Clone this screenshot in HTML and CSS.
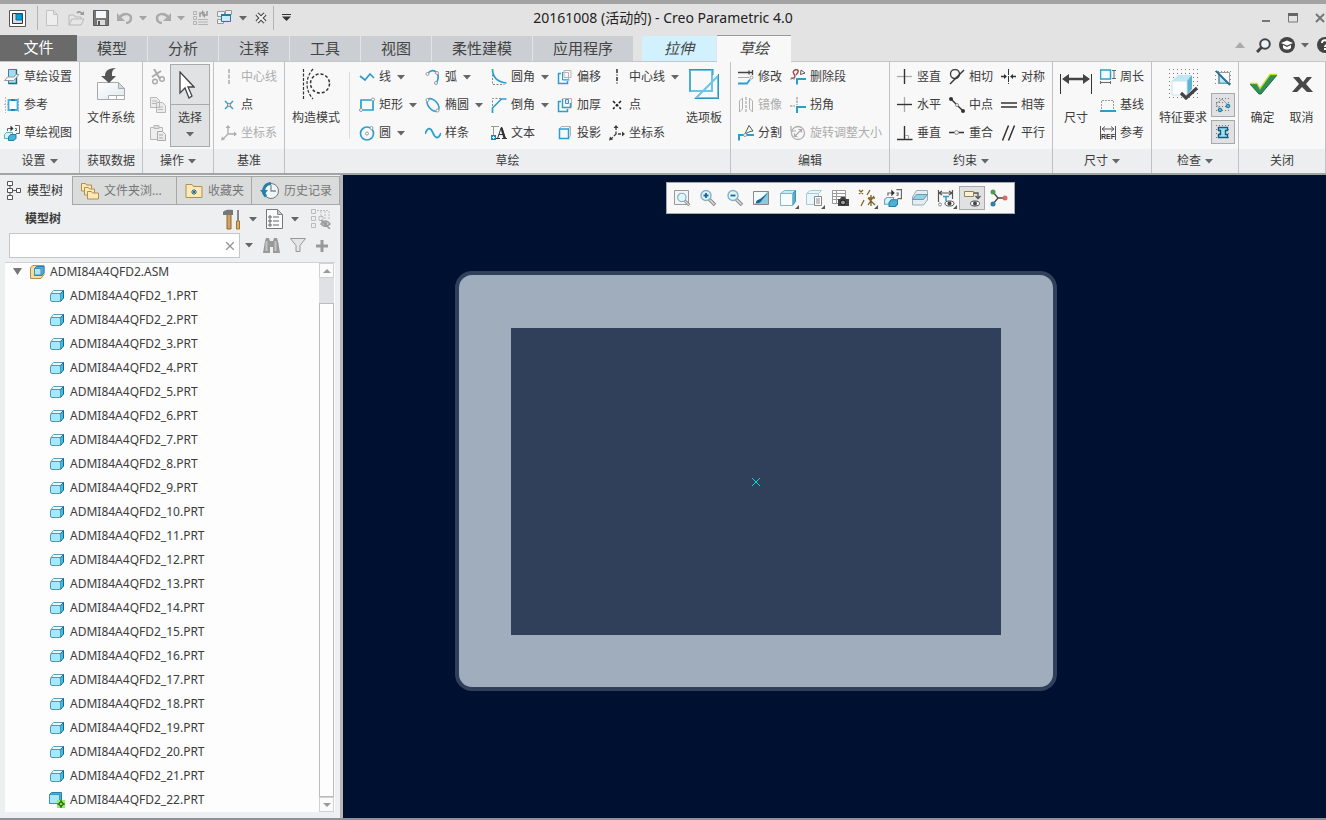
FILE: index.html
```html
<!DOCTYPE html>
<html lang="zh-CN">
<head>
<meta charset="utf-8">
<title>20161008 (活动的) - Creo Parametric 4.0</title>
<link rel="stylesheet" href="styles.css">
</head>
<body>
<svg class="sprite" aria-hidden="true">
  <symbol id="down" viewBox="0 0 8 5"><path d="M0 0h8L4 4.500z" fill="#666"/></symbol>
  <symbol id="part" viewBox="0 0 14 12"><path d="M1 3.500 3.500.5h10L11 3.500z" fill="#e4f9ff" stroke="#5a9dba"/><path d="M10.500 3.500l3-3v7.500l-3 3.500z" fill="#45b8ea" stroke="#1b6688"/><rect x=".5" y="3.500" width="10" height="8" rx="1.500" fill="#a9e8fb" stroke="#4a9cbd"/></symbol>
  <symbol id="views" viewBox="0 0 16 16"><path d="M3.500 6V3.500h4M11 .5h4.500v8H12M11 3.500h1.500v2H11" fill="none" stroke="#666"/><path d="M6.500.5l3 3-3 3z" fill="#333"/><path d="M.5 9.500l2-2h6v4l-2 2h-6z" fill="#d9f1f9" stroke="#5fa9c5"/><path d="M4.500 12l2-2.500h5.500v4l-2 2H4.500z" fill="#4fb0d6" stroke="#2481a8"/></symbol>
  <symbol id="csys" viewBox="0 0 16 16"><path d="M7 2v7h7M7 9l-5 5" fill="none" stroke="currentColor" stroke-width="1.300" stroke-dasharray="var(--dash)"/><path d="M7 0l2.500 3h-5zM16 9l-3-2.500v5zM0 15.500l1-4 3 3z" fill="currentColor"/></symbol>
  <symbol id="lens" viewBox="0 0 18 18"><path d="M10 10l6 6" stroke="#888" stroke-width="3.500"/><path d="M10 10l5.500 5.500" stroke="#ddd" stroke-width="1.500"/><circle cx="7" cy="6.500" r="5" fill="#e2f5fb" stroke="#7fb3c8" stroke-width="1.400"/></symbol>
</svg>

<header class="titlebar">
  <div class="quick">
    <svg class="logo" width="17" height="17" viewBox="0 0 17 17"><path d="M.5.5h16v16H.5z" fill="#fff" stroke="#555"/><path d="M3.500 3.500h10v10h-10z" fill="#ddd" stroke="#333"/><path d="M7 4h6v6H7z" fill="#00a0e0" stroke="#0870a8"/></svg>
    <span class="bar"></span>
    <button class="ic" aria-label="新建"><svg width="16" height="16" viewBox="0 0 16 16"><path d="M2.500.5h7l4 4v11h-11zM9.500.5v4h4" fill="#eee" stroke="#c3c3c3"/></svg></button>
    <button class="ic" aria-label="打开"><svg width="17" height="16" viewBox="0 0 17 16"><path d="M1 15V5h5l1 2h6v2M1 15l3-6h12l-3 6z" fill="#e6e6e6" stroke="#b8b8b8"/><path d="M9 3c2-2 4-1 5 1" fill="none" stroke="#999" stroke-width="1.800"/><path d="M12 5h4V1z" fill="#999"/></svg></button>
    <button class="ic" aria-label="保存"><svg width="16" height="16" viewBox="0 0 16 16"><path d="M.5.5h15v15H.5z" fill="#777" stroke="#5a5a5a"/><path d="M3 1h10v7H3z" fill="#f4f8fa"/><path d="M4 10h8v5H4z" fill="#ddd"/><path d="M5 11h2v4H5z" fill="#555"/></svg></button>
    <button class="ic undo" aria-label="撤消"><svg width="16" height="14" viewBox="0 0 16 14"><path d="M3 6c4-5 11-3 11 1 0 3-2 5-5 5" fill="none" stroke="#aaa" stroke-width="2.500"/><path d="M0 2v8h8z" fill="#aaa"/></svg><svg class="dim" width="8" height="5"><use href="#down"/></svg></button>
    <button class="ic undo" aria-label="重做"><svg width="16" height="14" viewBox="0 0 16 14"><path d="M13 6C9 1 2 3 2 7c0 3 2 5 5 5" fill="none" stroke="#aaa" stroke-width="2.500"/><path d="M16 2v8H8z" fill="#aaa"/></svg><svg class="dim" width="8" height="5"><use href="#down"/></svg></button>
    <button class="ic" aria-label="重新生成"><svg width="16" height="16" viewBox="0 0 16 16"><path d="M.5 1.500h3v3h-3zM.5 6.500h3v3h-3zM.5 11.500h3v3h-3zM5 9.500h10M5 12h10M5 14.500h10" fill="none" stroke="#b3b3b3"/><path d="M7 7V3h3M14 1v4h-3" fill="none" stroke="#999" stroke-width="1.500"/><path d="M9 0v5l3-2zM12 2v6L9 5z" fill="#999"/></svg></button>
    <button class="ic undo" aria-label="窗口"><svg width="16" height="16" viewBox="0 0 16 16"><path d="M.5 1.500h7v5h-7zM8.500.5h6v4h-6zM.5 9.500h6v4h-6z" fill="#eee" stroke="#999"/><path d="M4.500 4.500h9v7h-9z" fill="#c9edf8" stroke="#1c7fa8"/><path d="M4 5h10" stroke="#1c7fa8" stroke-width="2"/></svg><svg width="8" height="5"><use href="#down"/></svg></button>
    <button class="ic" aria-label="关闭窗口"><svg width="12" height="12" viewBox="0 0 12 12"><path d="M2 2l8 8M10 2l-8 8" stroke="#444" stroke-width="4.200"/><path d="M2 2l8 8M10 2l-8 8" stroke="#f4f4f4" stroke-width="2"/></svg></button>
    <span class="bar end"></span>
    <button class="ic" aria-label="自定义快速访问工具栏"><svg width="10" height="8" viewBox="0 0 10 8"><path d="M0 .5h9" stroke="#333"/><path d="M0 2.500h9L4.500 7z" fill="#333"/></svg></button>
  </div>
  <h1>20161008 (活动的) - Creo Parametric 4.0</h1>
  <div class="window">
    <button class="ic" aria-label="最小化"><svg width="10" height="10" viewBox="0 0 10 10"><path d="M1 8h8" stroke="#777" stroke-width="2"/></svg></button>
    <button class="ic" aria-label="最大化"><svg width="10" height="10" viewBox="0 0 10 10"><path d="M.5 1v8h9V1z" fill="none" stroke="#777"/><path d="M0 1.500h10" stroke="#666" stroke-width="3"/></svg></button>
    <button class="ic" aria-label="关闭"><svg width="10" height="10" viewBox="0 0 10 10"><path d="M1 1l8 8M9 1L1 9" stroke="#777" stroke-width="2"/></svg></button>
  </div>
</header>

<nav class="tabs">
  <button class="tab file">文件</button>
  <button class="tab">模型</button>
  <button class="tab">分析</button>
  <button class="tab">注释</button>
  <button class="tab">工具</button>
  <button class="tab">视图</button>
  <button class="tab wide">柔性建模</button>
  <button class="tab wide">应用程序</button>
  <button class="tab context">拉伸</button>
  <button class="tab current">草绘</button>
  <div class="help">
    <button class="ic" aria-label="最小化功能区"><svg width="10" height="6" viewBox="0 0 10 6"><path d="M0 6h10L5 0z" fill="#aaa"/></svg></button>
    <button class="ic search" aria-label="搜索"><svg width="15" height="15" viewBox="0 0 15 15"><circle cx="9" cy="6" r="4.800" fill="#e8f4f8" stroke="#444" stroke-width="2"/><path d="M5.500 9.500l-4.500 4.500" stroke="#444" stroke-width="3"/></svg></button>
    <button class="ic" aria-label="学习"><svg width="16" height="16" viewBox="0 0 16 16"><circle cx="8" cy="8" r="8" fill="#444"/><path d="M2 6l6-2.500L14 6 8 8.500z" fill="#fff"/><path d="M4 8v3c2 2 6 2 8 0V8L8 10z" fill="#fff"/></svg></button>
    <svg class="menu" width="8" height="5"><use href="#down"/></svg>
    <button class="ic" aria-label="帮助"><svg width="16" height="16" viewBox="0 0 16 16"><circle cx="8" cy="8" r="8" fill="#444"/><path d="M5 6c0-4 6-3.500 6 0 0 2-3 2-3 4M8 11v2" fill="none" stroke="#fff" stroke-width="2"/></svg></button>
  </div>
</nav>

<section class="ribbon">
  <div class="group g-set">
    <div class="tools">
      <div class="cols">
        <button class="tool"><svg viewBox="0 0 16 16"><path d="M4.500.5h8v14H4.500z" fill="#a3dcee" stroke="#2a86aa"/><path d="M12.500.5v14h-8" fill="none" stroke="#1c6a8a" stroke-width="1.400"/><path d="M.5 11.500h9l5.500-6h-3l-2 2.500H3.500z" fill="#f5fafc" stroke="#999"/></svg>草绘设置</button>
        <button class="tool"><svg viewBox="0 0 16 16"><path d="M1.500 0v16M14.500 1v14M0 7.500h5" stroke="#bbb" stroke-dasharray="2 1"/><path d="M4.500 3h9v10h-9z" fill="#fff" stroke="#43aedb" stroke-width="1.800"/><path d="M7 3h4M7 13h4" stroke="#2683ab" stroke-width="1.800"/></svg>参考</button>
        <button class="tool"><svg viewBox="0 0 16 16"><use href="#views"/></svg>草绘视图</button>
      </div>
    </div>
    <button class="caption">设置<svg width="8" height="5"><use href="#down"/></svg></button>
  </div>

  <div class="group g-get">
    <div class="tools">
      <button class="big"><svg viewBox="0 0 32 32"><defs><linearGradient id="page" x1="0" y1="0" x2="1" y2="1"><stop offset="0" stop-color="#fff"/><stop offset="1" stop-color="#dfe8ec"/></linearGradient></defs><path d="M2.500 14.500h21l6 6v11h-27z" fill="url(#page)" stroke="#a8a8a8"/><path d="M23.500 14.500v6h6z" fill="#c3dfea" stroke="#a8a8a8"/><path d="M13.500 27.500h16v4h-16zM21.500 28v3" fill="#fff" stroke="#aaa"/><path d="M21 0C12 0 10 4 10 8H6l8 7 7-7h-4c0-4 0-6 4-8z" fill="#555"/></svg>文件系统</button>
    </div>
    <div class="caption">获取数据</div>
  </div>

  <div class="group g-op">
    <div class="tools">
      <div class="cols">
        <button class="tool" disabled aria-label="剪切"><svg viewBox="0 0 16 16"><path d="M4 0l6 10M11 2l-9 6" stroke="#aaa" stroke-width="2"/><circle cx="5" cy="12.500" r="2.300" fill="none" stroke="#aaa" stroke-width="1.500"/><circle cx="12" cy="10" r="2.300" fill="none" stroke="#aaa" stroke-width="1.500"/></svg></button>
        <button class="tool" disabled aria-label="复制"><svg viewBox="0 0 16 16"><path d="M.5.5h6l3 3v7h-9zM2 4h5M2 6.500h5M6.500 5.500h6l3 3v7h-9z" fill="#ececec" stroke="#b8b8b8"/><path d="M8 10h5M8 12.500h5" stroke="#b8b8b8"/></svg></button>
        <button class="tool" disabled aria-label="粘贴"><svg viewBox="0 0 16 16"><path d="M.5 2.500h12v12H.5z" fill="#eee" stroke="#b8b8b8"/><path d="M4 .5h5v3H4z" fill="#ddd" stroke="#b8b8b8"/><path d="M7.500 6.500h5l3 3v6h-8zM9 10h4M9 13h4" fill="#ececec" stroke="#aaa"/></svg></button>
      </div>
      <button class="select"><span class="arrow"><svg width="16" height="28" viewBox="0 0 16 28"><path d="M1 1v21l5-5 4 10 3-2-4-9h6z" fill="#fff" stroke="#444" stroke-width="1.300"/></svg></span><span class="pick">选择<svg width="8" height="5"><use href="#down"/></svg></span></button>
    </div>
    <button class="caption">操作<svg width="8" height="5"><use href="#down"/></svg></button>
  </div>

  <div class="group g-datum">
    <div class="tools">
      <div class="cols">
        <button class="tool" disabled><svg viewBox="0 0 16 16"><path d="M8 0v16" stroke="#aaa" stroke-width="1.500" stroke-dasharray="4 1.500"/></svg>中心线</button>
        <button class="tool"><svg viewBox="0 0 16 16"><path d="M4 4l8 8M12 4l-8 8" stroke="#289fcc" stroke-width="1.400"/><circle cx="8" cy="8" r="1.500" fill="#fff" stroke="#888"/></svg>点</button>
        <button class="tool" disabled><svg viewBox="0 0 16 16"><use href="#csys"/></svg>坐标系</button>
      </div>
    </div>
    <div class="caption">基准</div>
  </div>

  <div class="group g-sketch">
    <div class="tools">
      <button class="big"><svg viewBox="0 0 32 32"><path d="M3.500 1v30M13 1C5 10 5 22 13 31" fill="none" stroke="#333" stroke-width="1.200" stroke-dasharray="3 1.500"/><circle cx="20" cy="15.500" r="9.500" fill="none" stroke="#333" stroke-width="1.500" stroke-dasharray="3 2"/></svg>构造模式</button>
      <div class="cols sketch">
        <button class="tool"><svg viewBox="0 0 16 16"><path d="M1 7l5 4 5-6 4 4" fill="none" stroke="#2a9fce" stroke-width="1.700"/></svg>线<svg class="dd" viewBox="0 0 8 5"><use href="#down"/></svg></button>
        <button class="tool"><svg viewBox="0 0 16 16"><path d="M3 4c5-5 13-1 9 9" fill="none" stroke="#2a9fce" stroke-width="1.700"/><g fill="#fff" stroke="#999"><circle cx="2.500" cy="5" r="1.500"/><circle cx="12" cy="4" r="1.500"/><circle cx="11" cy="14" r="1.500"/></g></svg>弧<svg class="dd" viewBox="0 0 8 5"><use href="#down"/></svg></button>
        <button class="tool"><svg viewBox="0 0 16 16"><path d="M1.500 2v13.500h12" fill="none" stroke="#888" stroke-dasharray="2 1.500"/><path d="M1.500 0c0 8 5 13 14 14" fill="none" stroke="#2a9fce" stroke-width="1.700"/></svg>圆角<svg class="dd" viewBox="0 0 8 5"><use href="#down"/></svg></button>
        <button class="tool"><svg viewBox="0 0 16 16"><path d="M7 1.500h7v7H7zM5.500 3.500h6v7h-6z" fill="none" stroke="#b5b5b5"/><path d="M4 4.500H1.500v10h9V12" fill="none" stroke="#2a9fce" stroke-width="1.500"/><path d="M5.500 3v8h7" fill="none" stroke="#2a9fce"/></svg>偏移</button>
        <button class="tool"><svg viewBox="0 0 16 16"><path d="M8 0v16" stroke="#111" stroke-width="1.300" stroke-dasharray="4 1.500 1 1.500"/></svg>中心线<svg class="dd" viewBox="0 0 8 5"><use href="#down"/></svg></button>

        <button class="tool"><svg viewBox="0 0 16 16"><path d="M2 3h12v10H2z" fill="none" stroke="#2a9fce" stroke-width="1.700"/><g fill="#fff" stroke="#999"><circle cx="14" cy="2.500" r="1.500"/><circle cx="2" cy="13" r="1.500"/></g></svg>矩形<svg class="dd" viewBox="0 0 8 5"><use href="#down"/></svg></button>
        <button class="tool"><svg viewBox="0 0 16 16"><ellipse cx="8" cy="8" rx="7.500" ry="4.500" transform="rotate(48 8 8)" fill="none" stroke="#2a9fce" stroke-width="1.600"/><g fill="#fff" stroke="#999"><circle cx="2.500" cy="3" r="1.500"/><circle cx="12.500" cy="13.500" r="1.500"/></g></svg>椭圆<svg class="dd" viewBox="0 0 8 5"><use href="#down"/></svg></button>
        <button class="tool"><svg viewBox="0 0 16 16"><path d="M1.500 9V1.500h10" fill="none" stroke="#888" stroke-dasharray="2 1.500"/><path d="M1.500 16v-5l9-9h5" fill="none" stroke="#2a9fce" stroke-width="1.700"/></svg>倒角<svg class="dd" viewBox="0 0 8 5"><use href="#down"/></svg></button>
        <button class="tool"><svg viewBox="0 0 16 16"><path d="M5.500 1.500h9v9" fill="none" stroke="#b5b5b5"/><path d="M4 4.500H1.500v10h9V12" fill="none" stroke="#2a9fce" stroke-width="1.500"/><path d="M5.500 2v8.500h8V6" fill="none" stroke="#2a9fce" stroke-width="1.400"/><path d="M8.500 2.500h3v4h-3z" fill="#cdeef8" stroke="#2a9fce"/></svg>加厚</button>
        <button class="tool"><svg viewBox="0 0 16 16"><path d="M4 4l8 8M12 4l-8 8" stroke="#222" stroke-width="1.500" stroke-dasharray="3 1.500"/></svg>点</button>

        <button class="tool"><svg viewBox="0 0 16 16"><circle cx="8" cy="8.500" r="6.500" fill="none" stroke="#2a9fce" stroke-width="1.700"/><g fill="#fff" stroke="#999"><circle cx="8" cy="8.500" r="1.500"/><circle cx="12.500" cy="3" r="1.500"/></g></svg>圆<svg class="dd" viewBox="0 0 8 5"><use href="#down"/></svg></button>
        <button class="tool"><svg viewBox="0 0 16 16"><path d="M0 9C3 1 6 3 8 8s5 7 8 0" fill="none" stroke="#2a9fce" stroke-width="1.900"/></svg>样条</button>
        <button class="tool"><svg viewBox="0 0 16 16"><path d="M2.500 10V1.500M0 1.500h8" fill="none" stroke="#999"/><path d="M0 10h5v5H0z" fill="#2585b0"/><path d="M2.500 11v3M1 12.500h3" stroke="#d9f3fb"/><path d="M5 13.500h4M11 13.500h5M6.500 13.500L10.500 2l4 11.500M8 9.500h5" fill="none" stroke="#333"/><path d="M10.500 3l3 10" stroke="#333" stroke-width="2.200"/></svg>文本</button>
        <button class="tool"><svg viewBox="0 0 16 16"><path d="M4.500 1.500h9v9M2.500 3.500l2-2M12.500 12.500l1-2M12 3.500l1.500-2" fill="none" stroke="#b0b0b0"/><path d="M2.500 4h9v9.500h-9z" fill="none" stroke="#2a9fce" stroke-width="1.500"/></svg>投影</button>
        <button class="tool dashed"><svg viewBox="0 0 16 16"><use href="#csys"/></svg>坐标系</button>
      </div>
      <button class="big"><svg viewBox="0 0 32 32"><path d="M2 2h22v21H2zM30 8v22H8z" fill="none" stroke="#6cc4e6" stroke-width="2"/><path d="M1 1.500h24M2 1v22.500M30.500 6v25M7 30.500h24M25 1v6" fill="none" stroke="#2f93bf"/></svg>选项板</button>
    </div>
    <div class="caption">草绘</div>
  </div>

  <div class="group g-edit">
    <div class="tools">
      <div class="cols two">
        <button class="tool"><svg viewBox="0 0 16 16"><path d="M0 3.500h15M14.500 1v5M11 1.500v4" stroke="#444" stroke-width="1.300"/><path d="M0 8.500h11" stroke="#aaa"/><path d="M0 14.500h9l3-4" fill="none" stroke="#2a9fce" stroke-width="1.800"/><circle cx="13.500" cy="8.500" r="1.500" fill="#fff" stroke="#999"/></svg>修改</button>
        <button class="tool"><svg viewBox="0 0 16 16"><path d="M8 1C5 0 2 2 4 5s0 5-3 4M8 1c1 2-1 4-2 5" fill="none" stroke="#a05050" stroke-width="1.500"/><path d="M11 1l4 3-4.500 1.500z" fill="#fff" stroke="#555"/><path d="M7 15.500V10h9" fill="none" stroke="#2a9fce" stroke-width="2"/><path d="M0 10h5" stroke="#999" stroke-dasharray="2 1"/></svg>删除段</button>
        <button class="tool" disabled><svg viewBox="0 0 16 16"><path d="M1.500 4l3-3v11l-3 3zM14.500 4l-3-3v11l3 3z" fill="none" stroke="#b0b0b0"/><path d="M8 0v16" stroke="#999" stroke-dasharray="3 1"/></svg>镜像</button>
        <button class="tool"><svg viewBox="0 0 16 16"><path d="M7 0v8M0 9h5" fill="none" stroke="#aaa" stroke-width="1.500" stroke-dasharray="2.500 1"/><path d="M7 16v-6h9" fill="none" stroke="#2a9fce" stroke-width="2"/></svg>拐角</button>
        <button class="tool"><svg viewBox="0 0 16 16"><path d="M1 15.500V10h5M9 10h7" fill="none" stroke="#2a9fce" stroke-width="2"/><path d="M7 9l4-8.500 4 5.500-3 .5z" fill="#fff" stroke="#555"/><circle cx="7" cy="10" r="1.500" fill="#fff" stroke="#999"/></svg>分割</button>
        <button class="tool" disabled><svg viewBox="0 0 16 16"><circle cx="8" cy="8" r="6.500" fill="none" stroke="#b0b0b0" stroke-width="1.300"/><path d="M5 11l6-6M4.500 8.500v3h3M8.500 4.500h3v3M1 1v5h5" fill="none" stroke="#aaa" stroke-width="1.200"/></svg>旋转调整大小</button>
      </div>
    </div>
    <div class="caption">编辑</div>
  </div>

  <div class="group g-cons">
    <div class="tools">
      <div class="cols three">
        <button class="tool"><svg viewBox="0 0 16 16"><path d="M0 7.500h15" stroke="#aaa" stroke-width="1.300"/><path d="M7.500 0v15" stroke="#333" stroke-width="1.400"/></svg>竖直</button>
        <button class="tool"><svg viewBox="0 0 16 16"><circle cx="6" cy="5" r="4.500" fill="none" stroke="#444" stroke-width="1.400"/><path d="M1 15L15 1" stroke="#333" stroke-width="1.400"/></svg>相切</button>
        <button class="tool"><svg viewBox="0 0 16 16"><path d="M7.500 0v15" stroke="#333" stroke-dasharray="6 1"/><path d="M0 7.500h3M12 7.500h3" stroke="#333" stroke-width="1.500"/><path d="M6 7.500L3 5v5zM9 7.500L12 5v5z" fill="#333"/></svg>对称</button>
        <button class="tool"><svg viewBox="0 0 16 16"><path d="M7.500 0v15" stroke="#aaa" stroke-width="1.300"/><path d="M0 7.500h15" stroke="#333" stroke-width="1.400"/></svg>水平</button>
        <button class="tool"><svg viewBox="0 0 16 16"><path d="M2 2l12 12" stroke="#333" stroke-width="1.400"/><circle cx="2" cy="2" r="2" fill="#333"/><circle cx="14" cy="14" r="2" fill="#333"/><circle cx="8" cy="8" r="1.500" fill="#fff" stroke="#888"/></svg>中点</button>
        <button class="tool"><svg viewBox="0 0 16 16"><path d="M0 6h16M0 10h16" stroke="#333" stroke-width="1.400"/></svg>相等</button>
        <button class="tool"><svg viewBox="0 0 16 16"><path d="M0 14.500h15.500M7.500 1v13" stroke="#333" stroke-width="1.400"/><path d="M8 10.500h3.500V14" fill="none" stroke="#aaa"/></svg>垂直</button>
        <button class="tool"><svg viewBox="0 0 16 16"><path d="M0 7.500h15" stroke="#333" stroke-width="1.500"/><circle cx="7.500" cy="7.500" r="2" fill="#eee" stroke="#999"/></svg>重合</button>
        <button class="tool"><svg viewBox="0 0 16 16"><path d="M1.500 15.500l6-15M7.500 15.500l6-15" stroke="#333" stroke-width="1.500"/></svg>平行</button>
      </div>
    </div>
    <button class="caption">约束<svg width="8" height="5"><use href="#down"/></svg></button>
  </div>

  <div class="group g-dim">
    <div class="tools">
      <button class="big"><svg viewBox="0 0 32 32"><path d="M.5 6v20M31.500 6v20" stroke="#333"/><path d="M7 11h18" stroke="#444" stroke-width="2.500"/><path d="M2 11l7-5v10zM30 11l-7-5v10z" fill="#444"/></svg>尺寸</button>
      <div class="cols">
        <button class="tool"><svg viewBox="0 0 16 16"><path d="M.5 1h10v9H.5z" fill="#f4fbfe" stroke="#2a9fce" stroke-width="1.500"/><path d="M12 1.500h4M12 9.500h4M14 2v7M.5 12v3M10.500 12v3M1 13.500h9" stroke="#666"/></svg>周长</button>
        <button class="tool"><svg viewBox="0 0 16 16"><path d="M1.500 12V3.500h12V12" fill="none" stroke="#999" stroke-dasharray="2 1"/><path d="M0 14h16" stroke="#2a9fce" stroke-width="2"/></svg>基线</button>
        <button class="tool"><svg viewBox="0 0 16 16"><path d="M.5 1v14M15.500 1v14M2 4h12M5 1.500L2 4l3 2.500M11 1.500L14 4l-3 2.500" fill="none" stroke="#555"/><text class="ref" x="8" y="14">REF</text></svg>参考</button>
      </div>
    </div>
    <button class="caption">尺寸<svg width="8" height="5"><use href="#down"/></svg></button>
  </div>

  <div class="group g-check">
    <div class="tools">
      <button class="big"><svg viewBox="0 0 32 32"><path d="M2 1.500h29M2 5.500h29M2 9.500h29M2 13.500h29M2 17.500h29M2 21.500h29M2 25.500h29M2 29.500h29" stroke="#777" stroke-dasharray="1 3"/><path d="M5 13l6-6h14l-5 6z" fill="#bfe6f3"/><path d="M20 13l5-6v14l-5 6z" fill="#5db3d3"/><path d="M5 13h15v14H5z" fill="#fbfdfe" stroke="#c8e4ee"/><path d="M14 25l5 5 11-10" fill="none" stroke="#444" stroke-width="3.200"/></svg>特征要求</button>
      <div class="toggles">
        <button class="toggle" aria-label="着色封闭环"><svg viewBox="0 0 16 16"><path d="M0 1.500h16M0 5.500h16M0 9.500h16M0 13.500h16" stroke="#888" stroke-dasharray="1 2"/><path d="M3.500 2.500h11v11h-11z" fill="#fff" stroke="#999"/><path d="M4.500 5v8h8z" fill="#bde8f5" stroke="#51a8c8"/><path d="M1 1l14 14" stroke="#1d6f96" stroke-width="1.800"/></svg></button>
        <button class="toggle on" aria-label="突出显示开放端" aria-pressed="true"><svg viewBox="0 0 16 16"><path d="M1 1.500h15M1 5.500h15M1 9.500h15M1 13.500h15" stroke="#777" stroke-dasharray="1 2"/><path d="M5 12L1 7l6-5 6 6" fill="none" stroke="#999"/><circle cx="13" cy="9" r="1.800" fill="#4cb6de" stroke="#1b7396"/><circle cx="5" cy="13" r="1.800" fill="#4cb6de" stroke="#1b7396"/></svg></button>
        <button class="toggle on" aria-label="重叠几何" aria-pressed="true"><svg viewBox="0 0 16 16"><path d="M1 1.500h15M1 5.500h15M1 9.500h15M1 13.500h15" stroke="#777" stroke-dasharray="1 2"/><path d="M3.500 3.500h9v3h-2v4h2v3h-9v-3h2v-4h-2z" fill="#9ddff3" stroke="#145d80" stroke-width="1.400"/></svg></button>
      </div>
    </div>
    <button class="caption">检查<svg width="8" height="5"><use href="#down"/></svg></button>
  </div>

  <div class="group g-close">
    <div class="tools">
      <button class="big"><svg viewBox="0 0 32 32"><path d="M3 16h7l3 5L23 7h7L14 26h-2z" fill="#2f9158" stroke="#1d6b3a"/><path d="M3 15.500h7l3 5L23 6.500h7" fill="none" stroke="#c6e02e" stroke-width="1.300"/></svg>确定</button>
      <button class="big"><svg viewBox="0 0 32 32"><path d="M7 9h6l4 5 4-5h5l-6 7 7 8h-6l-5-5-5 5H6l7-8z" fill="#484848"/></svg>取消</button>
    </div>
    <div class="caption">关闭</div>
  </div>
</section>

<main class="work">
  <aside class="side">
    <nav class="sidetabs">
      <button class="st on"><svg width="14" height="20" viewBox="0 0 14 20"><path d="M.5.500h5v4h-5zM.5 7.500h5v4h-5zM.5 14.500h5v4h-5zM9.500 7.500h4v4h-4zM3 5v2M3 12v2M6 9.500h3" fill="#fff" stroke="#555"/></svg>模型树</button>
      <button class="st"><svg width="18" height="18" viewBox="0 0 18 18"><g fill="#fbe9b8" stroke="#b58d4c"><path d="M.5 1.500h4l1 1.500h5v6H.5z"/><path d="M3.500 5.500h4l1 1.500h5v6h-10z"/><path d="M6.500 9.500h4l1 1.500h6v6h-11z"/></g></svg>文件夹浏...</button>
      <button class="st"><svg width="18" height="16" viewBox="0 0 18 16"><path d="M1 1.500h6l1.500 2H17v11H1z" fill="#fbe9b8" stroke="#b58d4c"/><path d="M9 6v6M6 9h6M7 7l4 4M11 7l-4 4" stroke="#1d6d93"/></svg>收藏夹</button>
      <button class="st"><svg width="19" height="18" viewBox="0 0 19 18"><circle cx="11" cy="9" r="7.500" fill="#eef6fa" stroke="#777"/><path d="M11 3v6h5" fill="none" stroke="#888" stroke-width="1.300"/><path d="M11 1.500a7.500 7.500 0 0 0-5 13" fill="none" stroke="#2481a8" stroke-width="3"/><path d="M0 8h8l-4 5z" fill="#2481a8"/></svg>历史记录</button>
    </nav>
    <div class="head">
      <h2>模型树</h2>
      <button class="ic pair" aria-label="设置"><svg width="18" height="21" viewBox="0 0 18 21"><path d="M4 5h4v15H4z" fill="#d5a45c" stroke="#8d6632"/><path d="M0 6V3c3-3 7-2 10-2v5z" fill="#777"/><path d="M15 1v11" stroke="#888" stroke-width="2"/><path d="M13.500 12h3v8h-3z" fill="#e0b060" stroke="#9d7430"/></svg><svg width="8" height="5"><use href="#down"/></svg></button>
      <button class="ic pair" aria-label="显示"><svg width="17" height="20" viewBox="0 0 17 20"><path d="M.5.500h11l5 5v14H.5z" fill="#f8fbfc" stroke="#777"/><path d="M11.500.500v5h5z" fill="#ccc" stroke="#888"/><path d="M3 7h2v2H3zM3 11h2v2H3zM3 15h2v2H3zM7 8h6M7 12h6M7 16h6" fill="none" stroke="#666"/></svg><svg width="8" height="5"><use href="#down"/></svg></button>
      <button class="ic" aria-label="隐藏项" disabled><svg width="20" height="20" viewBox="0 0 20 20"><path d="M.5.500h4v4h-4zM.5 7.500h4v4h-4zM.5 14.500h4v4h-4zM8 7.500h4v4H8z" fill="none" stroke="#bbb"/><path d="M6 1.500h12M10 2v5M14 2v8M18 2v8" stroke="#bbb" stroke-dasharray="2 1"/><path d="M10 15c3-4 6-4 9 0-3 3-6 3-9 0zM10 11l9 9" fill="none" stroke="#999" stroke-width="1.500"/><circle cx="14.500" cy="15" r="2" fill="#999"/></svg></button>
    </div>
    <div class="find">
      <label class="box"><input type="text" aria-label="搜索模型树"><svg width="8" height="8" viewBox="0 0 8 8"><path d="M0 0l8 8M8 0L0 8" stroke="#999" stroke-width="1.400"/></svg></label>
      <button class="ic" aria-label="搜索选项"><svg width="8" height="5"><use href="#down"/></svg></button>
      <button class="ic" aria-label="查找"><svg width="17" height="16" viewBox="0 0 17 16"><path d="M2 3l1-3h3l1 3h3l1-3h3l1 3 2 12h-7V9H7v6H0z" fill="#999"/><path d="M3.500 3v10M12.500 3v10" stroke="#c4c4c4" stroke-width="2"/></svg></button>
      <button class="ic" aria-label="过滤器"><svg width="16" height="15" viewBox="0 0 16 15"><path d="M.5.500h15L10 7.500v6H6v-6z" fill="#e5e5e5" stroke="#999"/></svg></button>
      <button class="ic" aria-label="添加"><svg width="12" height="12" viewBox="0 0 12 12"><path d="M6 0v12M0 6h12" stroke="#999" stroke-width="3"/></svg></button>
    </div>
    <div class="tree">
      <ul class="list">
        <li class="root"><svg width="9" height="7" viewBox="0 0 9 7"><path d="M0 0h9L4.500 7z" fill="#777"/></svg><svg width="15" height="14" viewBox="0 0 15 14"><path d="M.5 2.500L3 .5h11v9l-3 4H.5z" fill="#f5dda0" stroke="#b58d4c"/><path d="M4.500 3.500l2-2h7.500v6l-2 3H4.500z" fill="#3fb4e6" stroke="#2a7fa5"/><path d="M4.500 3.500H11v6.500H4.500z" fill="#a9e8fb" stroke="#3a93b8"/></svg>ADMI84A4QFD2.ASM</li>
        <li><svg width="14" height="12"><use href="#part"/></svg>ADMI84A4QFD2_1.PRT</li>
        <li><svg width="14" height="12"><use href="#part"/></svg>ADMI84A4QFD2_2.PRT</li>
        <li><svg width="14" height="12"><use href="#part"/></svg>ADMI84A4QFD2_3.PRT</li>
        <li><svg width="14" height="12"><use href="#part"/></svg>ADMI84A4QFD2_4.PRT</li>
        <li><svg width="14" height="12"><use href="#part"/></svg>ADMI84A4QFD2_5.PRT</li>
        <li><svg width="14" height="12"><use href="#part"/></svg>ADMI84A4QFD2_6.PRT</li>
        <li><svg width="14" height="12"><use href="#part"/></svg>ADMI84A4QFD2_7.PRT</li>
        <li><svg width="14" height="12"><use href="#part"/></svg>ADMI84A4QFD2_8.PRT</li>
        <li><svg width="14" height="12"><use href="#part"/></svg>ADMI84A4QFD2_9.PRT</li>
        <li><svg width="14" height="12"><use href="#part"/></svg>ADMI84A4QFD2_10.PRT</li>
        <li><svg width="14" height="12"><use href="#part"/></svg>ADMI84A4QFD2_11.PRT</li>
        <li><svg width="14" height="12"><use href="#part"/></svg>ADMI84A4QFD2_12.PRT</li>
        <li><svg width="14" height="12"><use href="#part"/></svg>ADMI84A4QFD2_13.PRT</li>
        <li><svg width="14" height="12"><use href="#part"/></svg>ADMI84A4QFD2_14.PRT</li>
        <li><svg width="14" height="12"><use href="#part"/></svg>ADMI84A4QFD2_15.PRT</li>
        <li><svg width="14" height="12"><use href="#part"/></svg>ADMI84A4QFD2_16.PRT</li>
        <li><svg width="14" height="12"><use href="#part"/></svg>ADMI84A4QFD2_17.PRT</li>
        <li><svg width="14" height="12"><use href="#part"/></svg>ADMI84A4QFD2_18.PRT</li>
        <li><svg width="14" height="12"><use href="#part"/></svg>ADMI84A4QFD2_19.PRT</li>
        <li><svg width="14" height="12"><use href="#part"/></svg>ADMI84A4QFD2_20.PRT</li>
        <li><svg width="14" height="12"><use href="#part"/></svg>ADMI84A4QFD2_21.PRT</li>
        <li class="active"><svg width="16" height="16" viewBox="0 0 16 16"><path d="M.5 2.500l2-2h10v9l-2 2H.5z" fill="#3fb4e6" stroke="#2a7fa5"/><path d="M.5 2.500h10v9H.5z" fill="#a9e8fb" stroke="#3a93b8"/><path d="M8 8h8v8H8z" fill="#8df05a"/><path d="M12 9.500l2.500 2.500-2.500 2.500L9.500 12zM12 8v2M12 14v2M8 12h2M14 12h2" fill="none" stroke="#245c12" stroke-width="1.200"/></svg>ADMI84A4QFD2_22.PRT</li>
      </ul>
      <div class="scroll">
        <button aria-label="向上滚动"><svg width="8" height="4" viewBox="0 0 8 4"><path d="M0 4h8L4 0z" fill="#999"/></svg></button>
        <div class="track"></div>
        <div class="thumb"></div>
        <button aria-label="向下滚动"><svg width="8" height="4" viewBox="0 0 8 4"><path d="M0 0h8L4 4z" fill="#999"/></svg></button>
      </div>
    </div>
  </aside>

  <section class="canvas">
    <div class="float">
      <button aria-label="重新调整"><svg viewBox="0 0 18 18"><path d="M1.500 1.500h14v14h-14z" fill="#f4f4f4" stroke="#999"/><g transform="translate(3 3)"><use href="#lens" width="15" height="15"/></g></svg></button>
      <button aria-label="放大"><svg viewBox="0 0 18 18"><use href="#lens"/><path d="M4.500 6.500h5M7 4v5" stroke="#156a90" stroke-width="1.800"/></svg></button>
      <button aria-label="缩小"><svg viewBox="0 0 18 18"><use href="#lens"/><path d="M4.500 6.500h5" stroke="#156a90" stroke-width="1.800"/></svg></button>
      <button aria-label="重画"><svg viewBox="0 0 18 18"><path d="M1.500 2.500h15v13h-15z" fill="#8cc9dd" stroke="#888"/><path d="M2 3h13L7 12l-5 3z" fill="#f2fafc"/><path d="M4 14c3 1 5-1 6-3l6-7-8 6c-2 1-4 1-4 4z" fill="#1b6688"/></svg></button>
      <button class="more" aria-label="显示样式"><svg viewBox="0 0 18 18"><path d="M1.500 4.500l4-3h11l-3 3z" fill="#c8e9f3" stroke="#7cb9ce"/><path d="M13.500 4.500l3-3v11l-3 4z" fill="#4fb3d6" stroke="#468da9"/><path d="M1.500 4.500h12v12h-12z" fill="#f8fdff" stroke="#83b9cb"/></svg></button>
      <button class="more" aria-label="已保存方向"><svg viewBox="0 0 18 18"><path d="M1.500 4.500l4-3h11l-3 3v11h-12z" fill="#e9f6fa" stroke="#a5cbd8"/><path d="M1.500 4.500h12" stroke="#a5cbd8"/><path d="M9.500 7.500h7v9h-7zM11 10h4M11 12h4M11 14h4" fill="#fff" stroke="#888"/></svg></button>
      <button aria-label="视图管理器"><svg viewBox="0 0 18 18"><path d="M1.500 1.500h13v13h-13zM1.500 4.500h13M1.500 7.500h13M1.500 10.500h13M5.500 1.500v13" fill="#fff" stroke="#999"/><path d="M7 10h2l1-2h4l1 2h3v7H7z" fill="#444"/><circle cx="12" cy="13.500" r="2.500" fill="#999" stroke="#111"/></svg></button>
      <button class="more" aria-label="基准显示过滤器"><svg viewBox="0 0 18 18"><path d="M1 1l4 4M5 1L1 5M12 1l-3 5M6 11l-3 6M10 9l7 7M17 9h-7M13 6v11M10 16l6-9" fill="none" stroke="#80642b" stroke-width="1.300"/></svg></button>
      <button aria-label="定向草绘"><svg viewBox="0 0 16 16"><use href="#views"/></svg></button>
      <button aria-label="修剪模型"><svg viewBox="0 0 18 18"><path d="M1.500 8l4-6.500h11V11l-4 5h-11z" fill="#e4edf1" stroke="#9aaab1"/><path d="M1.500 10.500l4-5h11l-4 5z" fill="#8ed3ea" stroke="#7297a4"/></svg></button>
      <button class="more" aria-label="草绘器显示过滤器"><svg viewBox="0 0 18 18"><path d="M1.500 1v12M15.500 1v9M2 4h13M5 2L2 4l3 2M12 2l3 2-3 2" fill="none" stroke="#555" stroke-width="1.200"/><path d="M6 7.500h6M9 7v5" stroke="#2a9fce" stroke-width="1.500"/><circle cx="3" cy="15.500" r="1.500" fill="#fff" stroke="#888"/><ellipse cx="12.500" cy="14.500" rx="4.500" ry="2.500" fill="#fff" stroke="#444"/><circle cx="12.500" cy="14.500" r="2" fill="#444"/></svg></button>
      <button class="on" aria-label="注释显示" aria-pressed="true"><svg viewBox="0 0 18 18"><path d="M1.500 2.500h9v5h-9z" fill="#fbf1d4" stroke="#997e50"/><path d="M11 4h4v5M12.500 7l2.500 2.500L17.500 7" fill="none" stroke="#555" stroke-width="1.300"/><ellipse cx="12" cy="14.500" rx="4.500" ry="2.500" fill="#fff" stroke="#444"/><circle cx="12" cy="14.500" r="2" fill="#444"/></svg></button>
      <button aria-label="旋转中心"><svg viewBox="0 0 18 18"><path d="M3 3l5 6-5 6M8 9h7" fill="none" stroke="#444" stroke-width="1.300"/><circle cx="3" cy="3" r="2.500" fill="#4e9c50"/><circle cx="3" cy="15" r="2.500" fill="#2e7fa8"/><circle cx="15" cy="9" r="2.500" fill="#dc6868"/></svg></button>
    </div>
    <svg class="model" width="602" height="420" viewBox="0 0 602 420"><rect x="2" y="2" width="598" height="416" rx="15" fill="#a0adbd" stroke="#31405a" stroke-width="4"/><path d="M56 57h490v307H56z" fill="#31405a"/><path d="M297 207l8 8M305 207l-8 8" stroke="#00d8dc"/></svg>
  </section>
</main>
</body>
</html>
```
FILE: styles.css
```css
* { box-sizing: border-box; }
body {
  margin: 0;
  min-height: 100vh;
  display: flex;
  flex-direction: column;
  overflow-x: hidden;
  border-top: 4px solid #a3a3a3;
  border-bottom: 2px solid #909194;
  background: #e3e3e3;
  color: #3c3c3c;
  font: 12px/16px "Noto Sans", "Noto Sans CJK SC", sans-serif;
}
button {
  margin: 0;
  padding: 0;
  border: 0;
  background: none;
  color: inherit;
  font: inherit;
  white-space: nowrap;
}
svg { display: block; flex: none; }
h1, h2 { margin: 0; }
.sprite { position: absolute; width: 0; height: 0; }
.ic { display: flex; align-items: center; }

/* Title bar */
.titlebar {
  display: grid;
  grid-template-columns: 1fr auto 1fr;
  align-items: center;
  height: 32px;
  padding-bottom: 4px;
}
.titlebar h1 { color: #222; font-size: 14px; font-weight: 400; line-height: 20px; }
.quick { display: flex; align-items: center; gap: 8px; padding-left: 9px; height: 24px; }
.quick .bar { width: 1px; height: 24px; margin-left: 4px; background: #b4b4b4; }
.quick .bar + .ic { margin-left: -2px; }
.quick .end { margin-left: -2px; }
.quick .end + .ic { margin-left: 0; }
.undo { gap: 6px; }
.dim { opacity: .5; }
.logo { margin-right: -1px; }
.window { display: flex; justify-content: flex-end; gap: 17px; margin-right: 1px; }

/* Ribbon tabs */
.tabs { display: flex; align-items: flex-end; height: 26px; border-bottom: 1px solid #c5c6c8; }
.tab {
  width: 71px;
  height: 25px;
  padding-bottom: 2px;
  border-right: 1px solid #e3e4e6;
  background: #cbced2;
  color: #444;
  font-size: 15px;
  line-height: 20px;
}
.tab.wide { width: 101px; }
.tab.file { width: 77px; height: 26px; border: 0; background: #6a6a6a; color: #fff; }
.tab.context { width: 75px; margin-left: 8px; background: #d2f1ff; font-style: italic; }
.tab.current { width: 74px; height: 27px; margin-bottom: -1px; border: 0; border-top: 1px solid #999; background: #f8f8f8; font-style: italic; }
.help { display: flex; align-items: center; gap: 8px; height: 18px; margin-left: auto; margin-right: -7px; align-self: flex-start; }
.search { margin-left: 3px; }
.menu { margin-left: -2px; }

/* Ribbon */
.ribbon { display: flex; background: #f8f8f8; border-bottom: 2px solid #a3a3a3; }
.group { display: flex; flex-direction: column; flex: 1 1 80px; border-right: 1px solid #bfc1c4; }
.g-get { flex-basis: 63px; }
.g-op, .g-datum { flex-basis: 71px; }
.g-sketch { flex-basis: 446px; }
.g-edit { flex-basis: 159px; }
.g-cons { flex-basis: 163px; }
.g-dim { flex-basis: 99px; }
.g-check, .g-close { flex-basis: 87px; }
.tools { display: flex; height: 87px; padding-left: 7px; }
.g-set .tools { padding-left: 4px; }
.g-get .tools { justify-content: center; padding: 0; }
.g-op .tools { gap: 4px; }
.caption {
  display: flex;
  align-items: center;
  justify-content: center;
  gap: 4px;
  height: 24px;
  background: #edeef0;
}
.cols { display: grid; grid-auto-rows: 28px; align-content: start; padding-top: 1px; }
.sketch { grid-template-columns: 66px 66px 66px 52px 71px; padding-left: 10px; position: relative; }
.sketch::before { content: ""; position: absolute; left: 0; top: 10px; width: 1px; height: 67px; background: #dcdcdc; }
.two { grid-template-columns: 52px auto; }
.three { grid-template-columns: 52px 52px auto; }
.tool { display: flex; align-items: center; gap: 4px; text-align: left; }
.tool svg { width: 16px; height: 16px; }
.tool .dd { width: 8px; height: 5px; margin-left: 2px; }
.tool:disabled { color: #acacac; }
.tool use { --dash: none; }
.dashed use { --dash: 3 1.5; }
.big { display: flex; flex-direction: column; align-items: center; width: 48px; padding-top: 6px; gap: 10px; }
.big svg { width: 32px; height: 32px; }
.g-sketch .big:first-child { margin-right: 9px; }
.g-dim .big { width: 32px; margin-right: 8px; }
.g-close .big { width: 39px; }
.g-close .tools { padding-left: 4px; }
.ref { font: 700 7px "Liberation Sans", sans-serif; fill: #333; text-anchor: middle; }
.select { display: flex; flex-direction: column; width: 40px; height: 83px; margin-top: 2px; border: 1px solid #a8a9ab; background: #e0e2e4; }
.arrow { display: flex; align-items: center; justify-content: center; width: 38px; height: 40px; padding-right: 6px; border-bottom: 1px solid #a8a9ab; }
.pick { display: flex; flex-direction: column; align-items: center; gap: 6px; width: 38px; padding-top: 5px; }
.toggles { display: flex; flex-direction: column; gap: 3px; padding: 4px 0 0 4px; }
.toggle { display: flex; align-items: center; justify-content: center; width: 24px; height: 24px; border: 1px solid transparent; }
.toggle svg { width: 16px; height: 16px; }
.toggle.on { border-color: #a8a9ab; background: #dfe1e3; }

/* Model tree panel */
.work { flex: 1; display: flex; }
.side { display: flex; flex-direction: column; width: 343px; padding-top: 1px; border-right: 3px solid #b5b7b9; background: #edeff1; }
.sidetabs { display: flex; height: 29px; }
.st { display: flex; align-items: center; flex: 1 1 75px; gap: 5px; padding-left: 8px; border: 1px solid #a5a7a7; border-left: 0; background: #d9dcdb; color: #777; }
.st.on { flex-basis: 73px; gap: 6px; border-top: 0; border-bottom: 0; padding-left: 7px; background: #edeff1; color: #333; }
.st:nth-child(2) { flex-basis: 104px; }
.st:nth-child(4) { flex-basis: 88px; }
.head { display: flex; align-items: center; height: 28px; padding: 0 9px 0 25px; gap: 12px; }
.head h2 { flex: 1; font-size: 12px; line-height: 16px; }
.pair { gap: 8px; }
.pair + .pair { margin-left: -3px; }
.find { display: flex; align-items: center; gap: 10px; height: 25px; padding: 0 12px 0 9px; }
.box { display: flex; align-items: center; flex: 1; height: 25px; margin-right: -5px; padding-right: 5px; border: 1px solid #c4c6c8; background: #fff; }
.box input { flex: 1; min-width: 0; border: 0; outline: 0; background: none; font: inherit; }
.tree { display: flex; flex: 1; margin: 4px 5px 6px; border-top: 1px solid #d0d3d5; background: #fdfdfd; }
.list { flex: 1; margin: 0; padding: 0; list-style: none; }
.list li { display: flex; align-items: center; gap: 6px; height: 24px; padding-left: 45px; }
.list .root { gap: 5px; height: 21px; padding: 0 0 4px 8px; }
.root svg + svg { margin-left: 3px; }
.list .active { gap: 5px; padding-left: 44px; }
.scroll { display: flex; flex-direction: column; width: 15px; margin-right: 1px; }
.scroll button { display: flex; align-items: center; justify-content: center; height: 15px; border: 1px solid #cfd1d3; background: #fafafa; }
.track { height: 25px; background: #dfe1e4; }
.thumb { flex: 1; border: 1px solid #b9bbbd; background: #fdfdfd; }

/* Graphics area */
.canvas { position: relative; flex: 1; min-width: 0; background: #001030; overflow: hidden; }
.float { position: absolute; left: 323px; top: 7px; display: flex; align-items: center; justify-content: space-between; width: 349px; height: 32px; padding: 0 2px; border: 1px solid #a8a9ab; background: #f8f8f8; }
.float button { display: flex; align-items: center; justify-content: center; position: relative; width: 26px; height: 24px; border: 1px solid transparent; }
.float svg { width: 18px; height: 18px; }
.float .on { border-color: #a8a9ab; background: #dfe1e3; }
.float .more::after { content: ""; position: absolute; right: 1px; bottom: 0; border: 2px solid; border-color: transparent #555 #555 transparent; }
.model { position: absolute; left: 112px; top: 96px; }
```
